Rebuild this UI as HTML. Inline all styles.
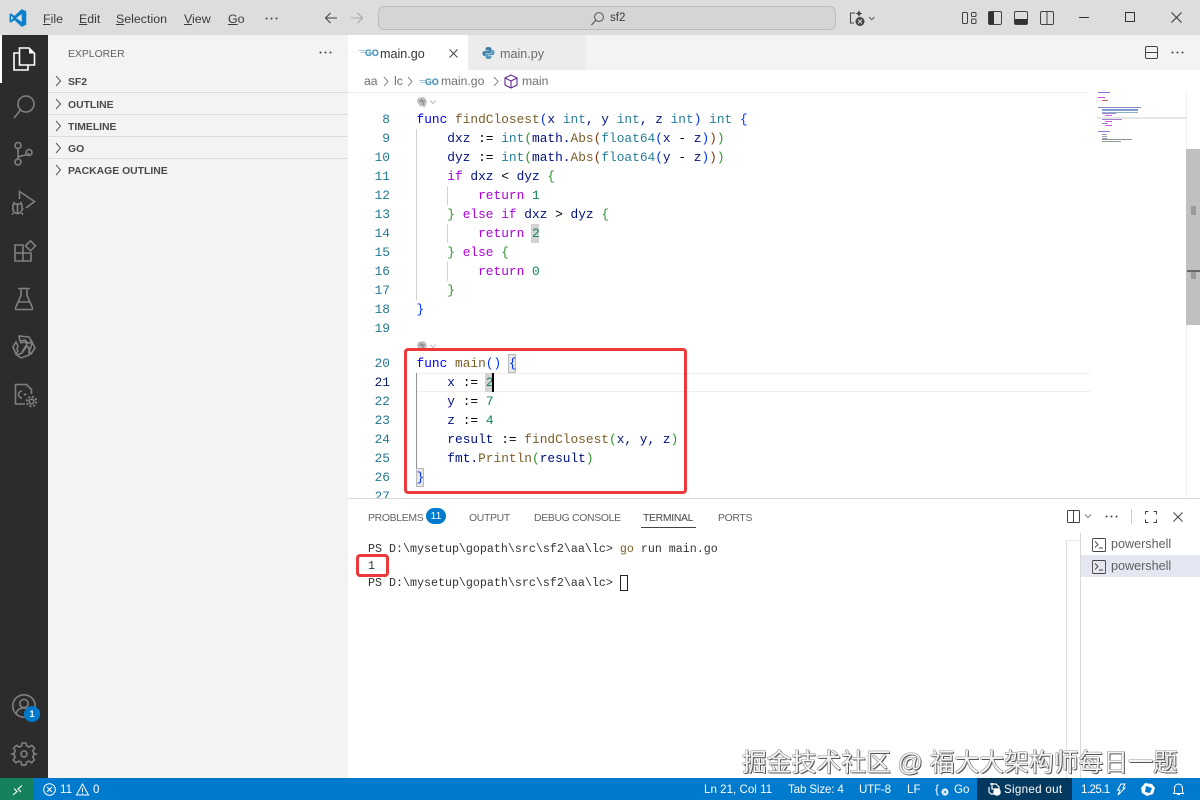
<!DOCTYPE html>
<html><head><meta charset="utf-8"><style>
html,body{margin:0;padding:0;width:1200px;height:800px;overflow:hidden;background:#fff;font-family:"Liberation Sans",sans-serif}
div,span,svg{box-sizing:border-box}
.a{position:absolute}
.t{position:absolute;white-space:nowrap}
.m{font-size:12.4px;color:#3b3b3b;top:11px;line-height:16px}
.sh{position:absolute;left:68px;font-size:10.4px;font-weight:700;color:#4a4a4a;line-height:14px;white-space:nowrap}
.ln{position:absolute;width:390px;left:0;text-align:right;font:12.83px/19px "Liberation Mono",monospace;color:#237893;white-space:nowrap}
.c{position:absolute;left:416.5px;font:12.83px/19px "Liberation Mono",monospace;color:#001080;white-space:pre}
.k{color:#0000ff}.f{color:#795e26}.y{color:#267f99}.r{color:#af00db}.n{color:#098658}.b{color:#0431fa}.g{color:#319331}.o{color:#7b3814}.d{color:#000}
.p{position:absolute;font-size:10.4px;letter-spacing:-.3px;color:#616161;top:512px;line-height:13px;white-space:nowrap}
.s{position:absolute;top:782px;font-size:11.6px;color:#fff;line-height:15px;white-space:nowrap}
.tm{position:absolute;left:368px;font:11.67px/17px "Liberation Mono",monospace;color:#333;white-space:pre}
.go{position:absolute;font-weight:700;color:#4f97b8;white-space:nowrap;-webkit-text-stroke:.25px #4f97b8}
svg{position:absolute;overflow:visible}
.w{stroke:#808080;fill:none;stroke-width:1.6}
.i{stroke:#424242;fill:none;stroke-width:1}
.mm{position:absolute;height:1px}
</style></head><body>
<!-- title bar -->
<div class="a" style="left:0;top:0;width:1200px;height:35px;background:#dddddd"></div>
<svg style="left:9px;top:9px" width="18" height="18" viewBox="0 0 100 100"><path d="M71 99 L96 87 V13 L71 1 L30 38 L12 24 L3 29 V71 L12 76 L30 62 Z M71 28 L40 50 L71 72 Z M12 36 L23 50 L12 64 Z" fill="#0a7fcb" fill-rule="evenodd"/></svg>
<div class="t m" style="left:43px"><u>F</u>ile</div>
<div class="t m" style="left:79px"><u>E</u>dit</div>
<div class="t m" style="left:116px"><u>S</u>election</div>
<div class="t m" style="left:184px"><u>V</u>iew</div>
<div class="t m" style="left:228px"><u>G</u>o</div>
<svg style="left:265px;top:17px" width="14" height="4"><circle cx="1.5" cy="1.5" r="1" fill="#444"/><circle cx="6.5" cy="1.5" r="1" fill="#444"/><circle cx="11.5" cy="1.5" r="1" fill="#444"/></svg>
<svg style="left:324px;top:11px" width="14" height="14" viewBox="0 0 14 14"><path d="M13 7H1.5M6.5 2L1.5 7l5 5" fill="none" stroke="#444" stroke-width="1.1"/></svg>
<svg style="left:350px;top:11px" width="14" height="14" viewBox="0 0 14 14"><path d="M1 7h11.5M7.5 2l5 5-5 5" fill="none" stroke="#aaa" stroke-width="1.1"/></svg>
<div class="a" style="left:378px;top:6px;width:458px;height:24px;background:#d5d5d5;border:1px solid #bdbdbd;border-radius:6px"></div>
<svg style="left:590px;top:11px" width="15" height="15" viewBox="0 0 15 15"><circle cx="9" cy="6" r="4.4" fill="none" stroke="#555" stroke-width="1"/><path d="M5.8 9.2L1.5 14" stroke="#555" stroke-width="1.1"/></svg>
<div class="t" style="left:610px;top:11px;font-size:11.5px;line-height:15px;color:#3b3b3b">sf2</div>
<svg style="left:849px;top:10px" width="24" height="17" viewBox="0 0 24 17"><path d="M6 3H1.5v10H5" fill="none" stroke="#444" stroke-width="1"/><path d="M10 0l1 2.4L13.400 3.500 11 4.600 10 7 9 4.600 6.600 3.500 9 2.400Z" fill="#444"/><circle cx="11" cy="11.500" r="4.500" fill="#444"/><path d="M9 9.500l4 4M13 9.500l-4 4" stroke="#ddd" stroke-width="1"/><path d="M20 7l2.700 2.700L25.400 7" fill="none" stroke="#555" stroke-width=".9"/></svg>
<svg style="left:962px;top:11px" width="16" height="14" viewBox="0 0 16 14"><rect x=".5" y="1.500" width="5" height="11" rx="1" class="i"/><rect x="9.500" y="1.500" width="4.500" height="4" rx="1" class="i"/><rect x="9.500" y="8" width="4.500" height="4.500" rx="1" class="i"/></svg>
<svg style="left:988px;top:11px" width="14" height="14" viewBox="0 0 14 14"><rect x=".5" y=".5" width="13" height="13" rx="1.500" class="i"/><rect x="1" y="1" width="5" height="12" fill="#333"/></svg>
<svg style="left:1014px;top:11px" width="14" height="14" viewBox="0 0 14 14"><rect x=".5" y=".5" width="13" height="13" rx="1.500" class="i"/><rect x="1" y="8" width="12" height="5" fill="#333"/></svg>
<svg style="left:1040px;top:11px" width="14" height="14" viewBox="0 0 14 14"><rect x=".5" y=".5" width="13" height="13" rx="1.500" class="i"/><path d="M7 1v12" class="i"/></svg>
<div class="a" style="left:1079px;top:17px;width:10px;height:1px;background:#333"></div>
<div class="a" style="left:1125px;top:12px;width:10px;height:10px;border:1px solid #333"></div>
<svg style="left:1171px;top:12px" width="11" height="11"><path d="M.5.500l10 10M10.500.500l-10 10" stroke="#333" stroke-width="1"/></svg>

<!-- activity bar -->
<div class="a" style="left:0;top:35px;width:48px;height:743px;background:#2c2c2c"></div>
<div class="a" style="left:0;top:35px;width:2px;height:48px;background:#fff"></div>
<svg style="left:12px;top:46px" width="24" height="26" viewBox="0 0 24 26"><path d="M9.500 7H2v17h14v-5" fill="none" stroke="#fff" stroke-width="1.600"/><path d="M7.500 2h9.500l5.500 5.500V19h-15Z" fill="#2c2c2c" stroke="#fff" stroke-width="1.600"/><path d="M17 2v5.500h5.500" fill="#fff"/></svg>
<svg style="left:12px;top:94px" width="24" height="26" viewBox="0 0 24 26"><circle cx="14" cy="10" r="8" class="w"/><path d="M8.500 16L2 24" class="w" stroke-width="2"/></svg>
<svg style="left:13px;top:141px" width="20" height="26" viewBox="0 0 20 26"><circle cx="5" cy="4.500" r="3" class="w"/><circle cx="5" cy="21" r="3" class="w"/><circle cx="16" cy="11.500" r="3" class="w"/><path d="M5 7.500v10.500M5 17c0-3 10-2 11-5" class="w"/></svg>
<svg style="left:12px;top:190px" width="25" height="26" viewBox="0 0 25 26"><path d="M7.500 9V1.500l15 10L14 18" class="w"/><path d="M3 14h6a1 1 0 0 1 1 1v4a4.500 4.500 0 0 1-9 0v-4a1 1 0 0 1 1-1ZM5.500 14v9M3 14l-1.500-2M8 14l1.500-2M1 19h-1M10 19h1.500M1.500 23l-1.500 1.500M9.500 23l1.500 1.500" class="w" stroke-width="1.400"/></svg>
<svg style="left:14px;top:240px" width="23" height="23" viewBox="0 0 23 23"><path d="M1 5h8v8h8v8H1ZM1 13h8v8" class="w"/><path d="M16.500 .8l5 5-5 5-5-5Z" class="w"/></svg>
<svg style="left:14px;top:287px" width="20" height="24" viewBox="0 0 20 24"><path d="M4 1.500h12M7 1.500v7L1.500 21a1 1 0 0 0 1 1.500h15a1 1 0 0 0 1-1.500L13 8.500v-7M4.500 15h11" class="w"/></svg>
<svg style="left:12px;top:334px" width="25" height="26" viewBox="0 0 25 26"><path d="M7 2l10 1 3 5-4 1-3-3-5 1ZM20 8l3 6-4 6-2-3 2-4ZM17 21l-8 3-4-3 5-2 5-7 2 2ZM4 20L1 13l3-5 2 4-1 3 1 2ZM8 9l5-1 2 2-5 8" class="w" stroke-width="1.500"/></svg>
<svg style="left:14px;top:383px" width="24" height="25" viewBox="0 0 24 25"><path d="M11 21H1.500V1.500h11l5 5V11" class="w" stroke-width="1.300"/><path d="M8 8a3.500 3.500 0 0 0 0 7" class="w" stroke-width="1.200"/><path d="M9.500 11.500h3M11 10v3" stroke="#808080" stroke-width=".9"/><circle cx="17.500" cy="18.500" r="2.300" class="w" stroke-width="2"/><circle cx="17.500" cy="18.500" r="4.800" fill="none" stroke="#808080" stroke-width="2" stroke-dasharray="2 1.800"/></svg>
<svg style="left:12px;top:694px" width="26" height="26" viewBox="0 0 26 26"><circle cx="12" cy="12" r="11.200" class="w" stroke-width="1.400"/><circle cx="12" cy="9.500" r="4.200" class="w" stroke-width="1.400"/><path d="M4 20c1-4 4-6 8-6s7 2 8 6" class="w" stroke-width="1.400"/></svg>
<div class="a" style="left:24px;top:706px;width:16px;height:16px;background:#007acc;border-radius:50%;color:#fff;font-size:9px;font-weight:700;line-height:16px;text-align:center">1</div>
<svg style="left:12px;top:742px" width="25" height="25" viewBox="0 0 25 25"><circle cx="12" cy="12" r="3" class="w" stroke-width="1.500"/><path d="M10 1h4l.7 3 2.400 1 2.700-1.600 2.800 2.800L20.800 8.900l1 2.400 2 .7-2 .8-1 2.400 1.600 2.700-2.800 2.800-2.700-1.600-2.400 1-.7 3h-4l-.7-3-2.400-1-2.700 1.600-2.800-2.800L3.200 15.100l-1-2.400-2-.7 2-.7 1-2.400L1.600 6.200l2.800-2.800 2.700 1.600 2.400-1Z" class="w" stroke-width="1.400"/></svg>

<!-- sidebar -->
<div class="a" style="left:48px;top:35px;width:300px;height:743px;background:#f3f3f3"></div>
<div class="t" style="left:68px;top:48px;font-size:10.400px;line-height:14px;color:#616161">EXPLORER</div>
<svg style="left:319px;top:51px" width="14" height="4"><circle cx="1.500" cy="1.500" r="1" fill="#444"/><circle cx="6.500" cy="1.500" r="1" fill="#444"/><circle cx="11.500" cy="1.500" r="1" fill="#444"/></svg>
<div class="sh" style="top:76px">SF2</div>
<div class="sh" style="top:99px">OUTLINE</div>
<div class="sh" style="top:121px">TIMELINE</div>
<div class="sh" style="top:143px">GO</div>
<div class="sh" style="top:165px">PACKAGE OUTLINE</div>
<div class="a" style="left:48px;top:92px;width:300px;height:1px;background:#dcdcdc"></div>
<div class="a" style="left:48px;top:114px;width:300px;height:1px;background:#dcdcdc"></div>
<div class="a" style="left:48px;top:136px;width:300px;height:1px;background:#dcdcdc"></div>
<div class="a" style="left:48px;top:158px;width:300px;height:1px;background:#dcdcdc"></div>
<svg style="left:55px;top:76px" width="7" height="100" viewBox="0 0 7 100" fill="none" stroke="#555" stroke-width="1"><path d="M1 0l4.500 5L1 10M1 23l4.500 5L1 33M1 45l4.500 5L1 55M1 67l4.500 5L1 77M1 89l4.500 5L1 99"/></svg>

<!-- tabs -->
<div class="a" style="left:348px;top:35px;width:852px;height:35px;background:#f3f3f3"></div>
<div class="a" style="left:348px;top:35px;width:120px;height:35px;background:#fff"></div>
<div class="a" style="left:468px;top:35px;width:118px;height:35px;background:#ececec"></div>
<svg style="left:359px;top:50px" width="7" height="5"><path d="M0 .500h6M1.500 2.500h4.500" stroke="#8fb8cc" stroke-width=".8"/></svg>
<div class="go" style="left:365px;top:47px;font-size:8.800px;line-height:12px">GO</div>
<div class="t" style="left:380px;top:46px;font-size:12.600px;line-height:16px;color:#333">main.go</div>
<svg style="left:449px;top:49px" width="9" height="9"><path d="M.5.500l8 8M8.500.500l-8 8" stroke="#444" stroke-width="1"/></svg>
<svg style="left:482px;top:46px" width="13" height="14" viewBox="0 0 13 14"><path d="M6.500 1C4 1 3.500 2 3.500 3v1.500h3.500v.6H2C1 5.100.5 6 .5 7.300S1 10 2 10h1.300V8.500C3.300 7.500 4 7 5 7h3c1 0 1.500-.6 1.500-1.500V3C9.500 2 8.800 1 6.500 1Z" fill="#3f7fa8"/><path d="M6.500 13c2.500 0 3-1 3-2V9.500H6V9h5c1 0 1.500-.9 1.500-2.200S12 4 11 4H9.900v1.500C9.900 6.600 9 7.500 8 7.500H5C4 7.500 3.500 8.100 3.500 9v2c0 1 .7 2 3 2Z" fill="#5a9bbf"/></svg>
<div class="t" style="left:500px;top:46px;font-size:12.600px;line-height:16px;color:#6b6b6b">main.py</div>
<svg style="left:1145px;top:46px" width="13" height="13" viewBox="0 0 13 13"><rect x=".5" y=".5" width="12" height="12" rx="1.500" class="i"/><path d="M.5 6.500h12" class="i"/></svg>
<svg style="left:1171px;top:51px" width="14" height="4"><circle cx="1.500" cy="1.500" r="1" fill="#444"/><circle cx="6.500" cy="1.500" r="1" fill="#444"/><circle cx="11.500" cy="1.500" r="1" fill="#444"/></svg>

<!-- breadcrumb -->
<div class="t" style="left:364px;top:74px;font-size:12.200px;line-height:15px;color:#6f6f6f">aa</div>
<div class="t" style="left:394px;top:74px;font-size:12.200px;line-height:15px;color:#6f6f6f">lc</div>
<svg style="left:383px;top:76px" width="60" height="11" fill="none" stroke="#777" stroke-width=".9"><path d="M1 1l4 4.500L1 10M25 1l4 4.500L25 10"/></svg>
<svg style="left:419px;top:80px" width="7" height="5"><path d="M0 .500h6M1.500 2.500h4.500" stroke="#8fb8cc" stroke-width=".8"/></svg>
<div class="go" style="left:425px;top:76px;font-size:8.800px;line-height:12px">GO</div>
<div class="t" style="left:441px;top:74px;font-size:12.200px;line-height:15px;color:#6f6f6f">main.go</div>
<svg style="left:493px;top:76px" width="7" height="11" fill="none" stroke="#777" stroke-width=".9"><path d="M1 1l4 4.500L1 10"/></svg>
<svg style="left:504px;top:74px" width="14" height="15" viewBox="0 0 14 15" fill="none" stroke="#652d90" stroke-width="1.100"><path d="M7 1l6 3v7l-6 3-6-3V4ZM1 4l6 3 6-3M7 7v7"/></svg>
<div class="t" style="left:522px;top:74px;font-size:12.200px;line-height:15px;color:#6f6f6f">main</div>
<div class="a" style="left:348px;top:92px;width:742px;height:2px;background:linear-gradient(#eeeeee,#fff)"></div>

<!-- minimap -->
<div class="a" style="left:1097px;top:117px;width:89px;height:2px;background:#e6e6e6"></div>
<div class="mm" style="left:1098px;top:92px;width:12px;background:#7a7ae0"></div>
<div class="mm" style="left:1098px;top:97px;width:7px;background:#c050e0"></div>
<div class="mm" style="left:1102px;top:100px;width:6px;background:#d86060"></div>
<div class="mm" style="left:1098px;top:107px;width:43px;background:#8a8ac8"></div>
<div class="mm" style="left:1102px;top:109px;width:36px;background:#7f9fd0;height:2px"></div>
<div class="mm" style="left:1102px;top:112px;width:36px;background:#90b0c8;height:1px"></div>
<div class="mm" style="left:1102px;top:113px;width:14px;background:#a080d0"></div>
<div class="mm" style="left:1105px;top:115px;width:7px;background:#d060e8"></div>
<div class="mm" style="left:1102px;top:119px;width:20px;background:#a080d0"></div>
<div class="mm" style="left:1105px;top:121px;width:7px;background:#d060e8"></div>
<div class="mm" style="left:1102px;top:123px;width:6px;background:#a080d0"></div>
<div class="mm" style="left:1105px;top:125px;width:7px;background:#d060e8"></div>
<div class="mm" style="left:1098px;top:131px;width:12px;background:#8080d8"></div>
<div class="mm" style="left:1102px;top:134px;width:5px;background:#90a0b8"></div>
<div class="mm" style="left:1102px;top:136px;width:5px;background:#90a0b8"></div>
<div class="mm" style="left:1102px;top:138px;width:5px;background:#90a0b8"></div>
<div class="mm" style="left:1102px;top:139px;width:30px;background:#909098"></div>
<div class="mm" style="left:1102px;top:141px;width:19px;background:#90a088"></div>
<!-- scrollbar -->
<div class="a" style="left:1186px;top:92px;width:1px;height:406px;background:#efefef"></div>
<div class="a" style="left:1186px;top:149px;width:14px;height:176px;background:#c0c0c0"></div>
<div class="a" style="left:1191px;top:206px;width:5px;height:9px;background:#9a9a9a"></div>
<div class="a" style="left:1187px;top:270px;width:13px;height:2px;background:#666"></div>
<div class="a" style="left:1191px;top:272px;width:5px;height:7px;background:#9a9a9a"></div>

<!-- editor decorations -->
<div class="a" style="left:416px;top:373px;width:674px;height:19px;border-top:1px solid #eeeeee;border-bottom:1px solid #eeeeee"></div>
<div class="a" style="left:531px;top:224px;width:8px;height:19px;background:#d3d3d3"></div>
<div class="a" style="left:485px;top:373px;width:8px;height:19px;background:#d3d3d3"></div>
<div class="a" style="left:508px;top:354px;width:8px;height:19px;background:#e8e8e8;border:1px solid #b9b9b9"></div>
<div class="a" style="left:416px;top:468px;width:8px;height:19px;background:#e8e8e8;border:1px solid #b9b9b9"></div>
<div class="a" style="left:416px;top:129px;width:1px;height:171px;background:#d3d3d3"></div>
<div class="a" style="left:447px;top:186px;width:1px;height:19px;background:#d3d3d3"></div>
<div class="a" style="left:447px;top:224px;width:1px;height:19px;background:#d3d3d3"></div>
<div class="a" style="left:447px;top:262px;width:1px;height:19px;background:#d3d3d3"></div>
<div class="a" style="left:416px;top:373px;width:1px;height:95px;background:#939393"></div>

<!-- code lens -->
<svg style="left:416px;top:96px" width="24" height="12" viewBox="0 0 24 12"><path d="M2 2l6-1 3 4-2 6-5-1-3-4Z" fill="#bdbdbd"/><path d="M3 5h6M5 3l3 6" stroke="#777" stroke-width=".8"/><path d="M14 4.500l3 3 3-3" fill="none" stroke="#aaa" stroke-width=".8"/></svg>
<svg style="left:416px;top:340px" width="24" height="12" viewBox="0 0 24 12"><path d="M2 2l6-1 3 4-2 6-5-1-3-4Z" fill="#bdbdbd"/><path d="M3 5h6M5 3l3 6" stroke="#777" stroke-width=".8"/><path d="M14 4.500l3 3 3-3" fill="none" stroke="#aaa" stroke-width=".8"/></svg>

<!-- line numbers -->
<div class="ln" style="top:110px">8</div>
<div class="ln" style="top:129px">9</div>
<div class="ln" style="top:148px">10</div>
<div class="ln" style="top:167px">11</div>
<div class="ln" style="top:186px">12</div>
<div class="ln" style="top:205px">13</div>
<div class="ln" style="top:224px">14</div>
<div class="ln" style="top:243px">15</div>
<div class="ln" style="top:262px">16</div>
<div class="ln" style="top:281px">17</div>
<div class="ln" style="top:300px">18</div>
<div class="ln" style="top:319px">19</div>
<div class="ln" style="top:354px">20</div>
<div class="ln" style="top:373px;color:#0b216f">21</div>
<div class="ln" style="top:392px">22</div>
<div class="ln" style="top:411px">23</div>
<div class="ln" style="top:430px">24</div>
<div class="ln" style="top:449px">25</div>
<div class="ln" style="top:468px">26</div>
<div class="ln" style="top:487px;height:11px;overflow:hidden">27</div>

<!-- code -->
<div class="c" style="top:110px"><span class="k">func</span> <span class="f">findClosest</span><span class="b">(</span>x <span class="y">int</span>, y <span class="y">int</span>, z <span class="y">int</span><span class="b">)</span> <span class="y">int</span> <span class="b">{</span></div>
<div class="c" style="top:129px">    dxz <span class="d">:=</span> <span class="y">int</span><span class="g">(</span>math.<span class="f">Abs</span><span class="o">(</span><span class="y">float64</span><span class="b">(</span>x <span class="d">-</span> z<span class="b">)</span><span class="o">)</span><span class="g">)</span></div>
<div class="c" style="top:148px">    dyz <span class="d">:=</span> <span class="y">int</span><span class="g">(</span>math.<span class="f">Abs</span><span class="o">(</span><span class="y">float64</span><span class="b">(</span>y <span class="d">-</span> z<span class="b">)</span><span class="o">)</span><span class="g">)</span></div>
<div class="c" style="top:167px">    <span class="r">if</span> dxz <span class="d">&lt;</span> dyz <span class="g">{</span></div>
<div class="c" style="top:186px">        <span class="r">return</span> <span class="n">1</span></div>
<div class="c" style="top:205px">    <span class="g">}</span> <span class="r">else</span> <span class="r">if</span> dxz <span class="d">&gt;</span> dyz <span class="g">{</span></div>
<div class="c" style="top:224px">        <span class="r">return</span> <span class="n">2</span></div>
<div class="c" style="top:243px">    <span class="g">}</span> <span class="r">else</span> <span class="g">{</span></div>
<div class="c" style="top:262px">        <span class="r">return</span> <span class="n">0</span></div>
<div class="c" style="top:281px">    <span class="g">}</span></div>
<div class="c" style="top:300px"><span class="b">}</span></div>
<div class="c" style="top:354px"><span class="k">func</span> <span class="f">main</span><span class="b">()</span> <span class="b">{</span></div>
<div class="c" style="top:373px">    x <span class="d">:=</span> <span class="n">2</span></div>
<div class="c" style="top:392px">    y <span class="d">:=</span> <span class="n">7</span></div>
<div class="c" style="top:411px">    z <span class="d">:=</span> <span class="n">4</span></div>
<div class="c" style="top:430px">    result <span class="d">:=</span> <span class="f">findClosest</span><span class="g">(</span>x, y, z<span class="g">)</span></div>
<div class="c" style="top:449px">    fmt.<span class="f">Println</span><span class="g">(</span>result<span class="g">)</span></div>
<div class="c" style="top:468px"><span class="b">}</span></div>
<div class="a" style="left:492px;top:373px;width:2px;height:19px;background:#000"></div>
<div class="a" style="left:404px;top:348px;width:283px;height:146px;border:3.500px solid #ec3a3c;border-radius:4px"></div>

<!-- panel -->
<div class="a" style="left:348px;top:498px;width:852px;height:280px;background:#fff;border-top:1px solid #d8d8d8"></div>
<div class="p" style="left:368px">PROBLEMS</div>
<div class="a" style="left:426px;top:508px;width:20px;height:16px;background:#007acc;border-radius:8px;color:#fff;font-size:10.500px;line-height:16px;text-align:center">11</div>
<div class="p" style="left:469px">OUTPUT</div>
<div class="p" style="left:534px">DEBUG CONSOLE</div>
<div class="p" style="left:643px;color:#424242">TERMINAL</div>
<div class="a" style="left:641px;top:527px;width:55px;height:1px;background:#424242"></div>
<div class="p" style="left:718px">PORTS</div>
<svg style="left:1067px;top:510px" width="28" height="13" viewBox="0 0 28 13"><rect x=".5" y=".5" width="12" height="12" rx="1" class="i"/><path d="M6.500.500v12" class="i"/><path d="M18 4.500l3 3 3-3" fill="none" stroke="#777" stroke-width=".9"/></svg>
<svg style="left:1105px;top:515px" width="14" height="4"><circle cx="1.500" cy="1.500" r="1" fill="#444"/><circle cx="6.500" cy="1.500" r="1" fill="#444"/><circle cx="11.500" cy="1.500" r="1" fill="#444"/></svg>
<div class="a" style="left:1131px;top:509px;width:1px;height:15px;background:#ccc"></div>
<svg style="left:1145px;top:511px" width="12" height="12" fill="none" stroke="#444" stroke-width="1"><path d="M.5 3.500v-3h3M8.500.500h3v3M11.500 8.500v3h-3M3.500 11.500h-3v-3"/></svg>
<svg style="left:1173px;top:512px" width="10" height="10"><path d="M.5.500l9 9M9.500.500l-9 9" stroke="#444" stroke-width="1"/></svg>
<div class="tm" style="top:541px">PS D:\mysetup\gopath\src\sf2\aa\lc&gt; <span style="color:#795e26">go</span> run main.go</div>
<div class="tm" style="top:558px">1</div>
<div class="tm" style="top:575px">PS D:\mysetup\gopath\src\sf2\aa\lc&gt; </div>
<div class="a" style="left:620px;top:575px;width:8px;height:16px;border:1px solid #222"></div>
<div class="a" style="left:356px;top:554px;width:33px;height:23px;border:3.500px solid #ec3a3c;border-radius:4px"></div>
<div class="a" style="left:1066px;top:540px;width:1px;height:238px;background:#dedede"></div>
<div class="a" style="left:1067px;top:540px;width:14px;height:1px;background:#e8e8e8"></div>
<div class="a" style="left:1080px;top:533px;width:1px;height:245px;background:#d8d8d8"></div>
<div class="a" style="left:1081px;top:555px;width:119px;height:22px;background:#e4e6f1"></div>
<svg style="left:1092px;top:538px" width="14" height="36" viewBox="0 0 14 36" fill="none" stroke="#444" stroke-width=".9"><rect x=".5" y=".5" width="13" height="13" rx="1"/><path d="M3 3.500l3 3-3 3M7 10h4"/><rect x=".5" y="22.500" width="13" height="13" rx="1"/><path d="M3 25.500l3 3-3 3M7 32h4"/></svg>
<div class="t" style="left:1111px;top:537px;font-size:12.600px;line-height:15px;color:#616161">powershell</div>
<div class="t" style="left:1111px;top:559px;font-size:12.600px;line-height:15px;color:#616161">powershell</div>

<!-- watermark -->
<div class="t" style="left:742px;top:749px;font-family:'Liberation Sans','Noto Sans CJK SC',sans-serif;font-size:24.800px;line-height:30px;color:#f4f4f4;text-shadow:1px 1px 0 #555,-.5px -.5px 0 #999,.5px -.5px 0 #999,-.5px .5px 0 #888;z-index:5">掘金技术社区 @ 福大大架构师每日一题</div>

<!-- status bar -->
<div class="a" style="left:0;top:778px;width:1200px;height:22px;background:#007acc"></div>
<div class="a" style="left:0;top:778px;width:34px;height:22px;background:#16825d"></div>
<svg style="left:12px;top:785px" width="11" height="11" fill="none" stroke="#fff" stroke-width="1.100"><path d="M1 10l4-3.500-3-3M10 .500L6 4l3 3"/></svg>
<svg style="left:43px;top:783px" width="13" height="13" fill="none" stroke="#fff" stroke-width="1"><circle cx="6.500" cy="6.500" r="5.800"/><path d="M4 4l5 5M9 4l-5 5"/></svg>
<div class="s" style="left:60px">11</div>
<svg style="left:76px;top:783px" width="13" height="13" fill="none" stroke="#fff" stroke-width="1"><path d="M6.500 1L12.500 12H.500ZM6.500 5v4M6.500 10v1"/></svg>
<div class="s" style="left:93px">0</div>
<div class="s" style="left:704px">Ln 21, Col 11</div>
<div class="s" style="left:788px;letter-spacing:-.15px">Tab Size: 4</div>
<div class="s" style="left:859px;letter-spacing:-.2px">UTF-8</div>
<div class="s" style="left:907px">LF</div>
<div class="s" style="left:935px">{</div>
<svg style="left:941px;top:788px" width="8" height="8"><circle cx="4" cy="4" r="3.500" fill="#fff"/><path d="M2.500 2.500l3 3M5.500 2.500l-3 3" stroke="#007acc" stroke-width=".8"/></svg>
<div class="s" style="left:954px">Go</div>
<div class="a" style="left:977px;top:778px;width:95px;height:22px;background:#03395e"></div>
<svg style="left:987px;top:782px" width="14" height="14" fill="none" stroke="#fff" stroke-width="1.200"><path d="M3 2h6l3 3v3M2 5v5l2 2h3M5 1v6h5"/><circle cx="10" cy="10" r="3.200" fill="#fff"/></svg>
<div class="s" style="left:1004px;letter-spacing:.3px">Signed out</div>
<div class="s" style="left:1081px;letter-spacing:-.6px">1.25.1</div>
<svg style="left:1116px;top:783px" width="10" height="13" fill="none" stroke="#fff" stroke-width="1"><path d="M5 1h4L7 5h2L2 12l2-5H1.500Z"/></svg>
<svg style="left:1141px;top:782px" width="15" height="15" fill="#fff"><path d="M4 1l7 1 3 4-2 6-6 2-5-3-1-5ZM5 4l-1 6 5 1 2-5Z" fill-rule="evenodd"/></svg>
<svg style="left:1172px;top:782px" width="13" height="14" fill="none" stroke="#fff" stroke-width="1"><path d="M2.500 10V6a4 4 0 0 1 8 0v4l1 1.500h-10ZM5 12.500h3"/></svg>
</body></html>
